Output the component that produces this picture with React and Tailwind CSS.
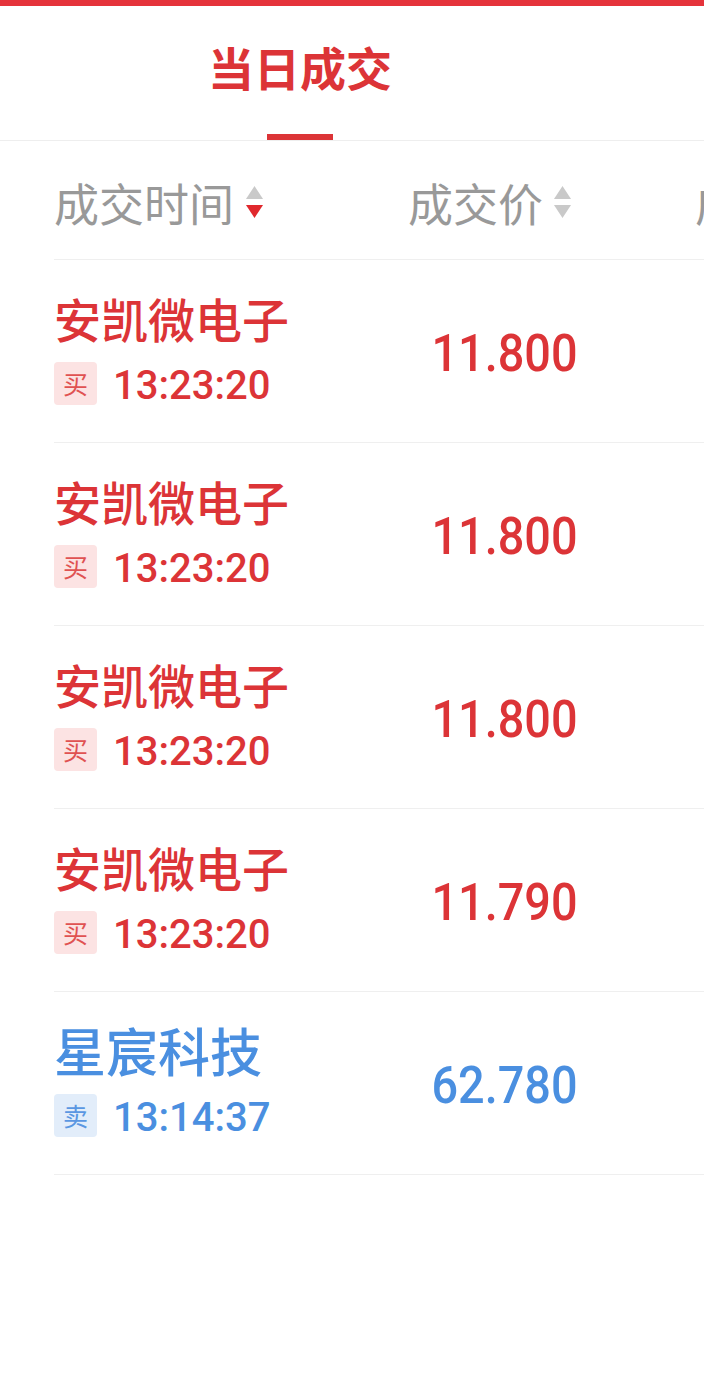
import React from 'react';

const trades = [
  { name: '安凯微电子', side: 'buy', time: '13:23:20', price: '11.800' },
  { name: '安凯微电子', side: 'buy', time: '13:23:20', price: '11.800' },
  { name: '安凯微电子', side: 'buy', time: '13:23:20', price: '11.800' },
  { name: '安凯微电子', side: 'buy', time: '13:23:20', price: '11.790' },
  { name: '星宸科技', side: 'sell', time: '13:14:37', price: '62.780' },
];

const cjk = "font-['Noto_Sans_CJK_SC',sans-serif]";
const num = "font-['Roboto','Noto_Sans_CJK_SC',sans-serif]";

function SortArrows({ active }) {
  return (
    <svg width="19" height="32" viewBox="0 0 19 32" className="shrink-0">
      <path d="M9.5 0 L18 13 L1 13 Z" fill="#c9c9c9" />
      <path d="M1 19 L18 19 L9.5 32 Z" fill={active ? '#e0282d' : '#c9c9c9'} />
    </svg>
  );
}

function TradeRow({ t }) {
  const buy = t.side === 'buy';
  const color = buy ? 'text-[#dc3437]' : 'text-[#4a8fe0]';
  // 短名称字号放大，占满列宽
  const nameSize = t.name.length <= 4 ? 'text-[52px]' : 'text-[47px]';
  return (
    <div className="flex h-[183px] border-b border-[#efefef]">
      {/* 名称 + 时间 */}
      <div className="w-[300px] shrink-0 pt-[32px] flex flex-col">
        <div className={`${cjk} ${color} ${nameSize} font-medium leading-[52px] whitespace-nowrap`}>{t.name}</div>
        <div className="mt-[18px] flex items-center h-[43px]">
          <span
            className={`${cjk} w-[43px] h-[43px] rounded-[4px] flex items-center justify-center text-[25px] leading-none ${
              buy ? 'bg-[#fce3e3] text-[#e05252]' : 'bg-[#e2edfa] text-[#5a97e2]'
            }`}
          >
            {buy ? '买' : '卖'}
          </span>
          <span className={`${num} ${color} ml-[16px] text-[40px] font-medium leading-none pt-[4px]`}>{t.time}</span>
        </div>
      </div>
      {/* 成交价 */}
      <div className="w-[226px] shrink-0 flex items-center justify-end pt-[6px]">
        <span className={`${num} ${color} inline-block origin-right scale-x-[0.9] text-[52px] font-medium leading-none pr-[3px]`}>
          {t.price}
        </span>
      </div>
    </div>
  );
}

export default function App() {
  return (
    <div className="w-[704px] min-h-[1396px] bg-white overflow-hidden">
      <div className="h-[6px] bg-[#e5333b]" />
      {/* Tab */}
      <div className="h-[135px] border-b border-[#eeeeee] w-full">
        <div className="w-[600px] h-full flex justify-center">
          <div className="flex flex-col items-center justify-end">
            <span className={`${cjk} text-[46px] font-bold leading-none text-[#dc3437]`}>当日成交</span>
            <span className="mt-[45px] w-[66px] h-[6px] bg-[#dc3437]" />
          </div>
        </div>
      </div>

      <div className="ml-[54px]">
        {/* 表头 */}
        <div className="flex items-center h-[119px] border-b border-[#efefef] pt-[4px] whitespace-nowrap">
          <div className="w-[300px] shrink-0 flex items-center gap-[11px]">
            <span className={`${cjk} text-[45px] leading-none text-[#999999]`}>成交时间</span>
            <SortArrows active />
          </div>
          <div className="w-[226px] shrink-0 flex items-center justify-end gap-[10px] pr-[8px]">
            <span className={`${cjk} text-[45px] leading-none text-[#999999]`}>成交价</span>
            <SortArrows />
          </div>
          <div className="ml-[115px] flex items-center gap-[10px]">
            <span className={`${cjk} text-[45px] leading-none text-[#999999]`}>成交量</span>
          </div>
        </div>

        {trades.map((t, i) => (
          <TradeRow key={i} t={t} />
        ))}
      </div>
    </div>
  );
}
